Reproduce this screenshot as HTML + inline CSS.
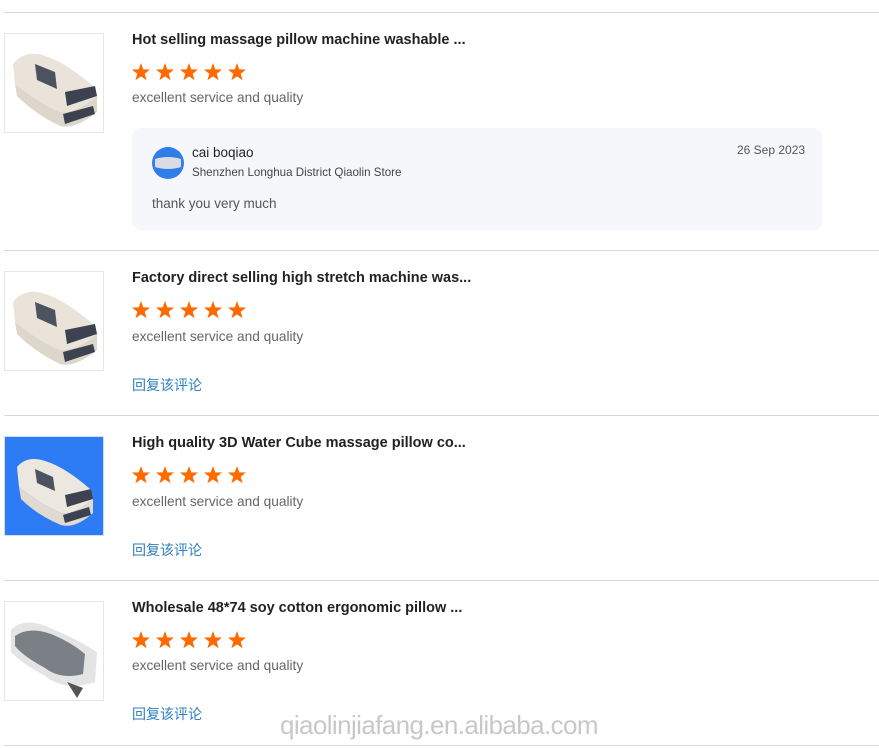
<!DOCTYPE html>
<html><head><meta charset="utf-8"><style>
*{margin:0;padding:0;box-sizing:border-box}
body{width:879px;height:748px;background:#fff;position:relative;overflow:hidden;font-family:"Liberation Sans","Noto Sans CJK SC",sans-serif}
.a{position:absolute;white-space:nowrap}
.line{position:absolute;left:4px;right:0;height:1px;background:#d8d8d8}
.img{position:absolute;left:4px;width:100px;height:100px;border:1px solid #e6e6e6;background:#fff;overflow:hidden}
.t{font-size:14.5px;font-weight:bold;color:#222;left:132px}
.d{font-size:13.7px;color:#666;left:132px}
.l{font-size:14px;color:#2f7fc0;left:132px}
.stars{position:absolute;left:132px}
</style></head><body>
<svg width="0" height="0" style="position:absolute"><defs><polygon id="s" points="9,0 11.29,6.34 18.03,6.56 12.71,10.71 14.58,17.19 9,13.4 3.42,17.19 5.29,10.71 -0.03,6.56 6.71,6.34"/></defs></svg>
<div class="line" style="top:12px"></div>
<div class="line" style="top:250px"></div>
<div class="line" style="top:415px"></div>
<div class="line" style="top:580px"></div>
<div class="line" style="top:745px"></div>

<div class="img" style="top:33px">
<svg width="100" height="100" viewBox="0 0 100 100"><path d="M8 30 Q20 15 40 22 Q60 28 88 52 L92 62 Q70 80 55 78 Q35 70 10 50Z" fill="#e9e3da"/><path d="M10 50 Q35 70 55 78 Q70 80 92 62 L92 78 Q70 96 55 92 Q30 80 12 62Z" fill="#ddd6cb"/><path d="M30 30 L50 38 L52 55 L32 46Z" fill="#4d5260"/><path d="M60 58 L90 52 L92 62 L62 72Z" fill="#3d4250"/><path d="M58 80 L88 72 L90 80 L60 90Z" fill="#3d4250"/></svg>
</div>
<div class="a t" style="top:32px">Hot selling massage pillow machine washable ...</div>
<svg class="stars" style="top:63px" width="120" height="18"><g fill="#ff6a00"><use href="#s"/><use href="#s" x="24"/><use href="#s" x="48"/><use href="#s" x="72"/><use href="#s" x="96"/></g></svg>
<div class="a d" style="top:90px">excellent service and quality</div>
<div style="position:absolute;left:132px;top:128px;width:690px;height:102px;background:#f5f7fa;border-radius:9px"></div>
<svg class="a" style="left:152px;top:147px" width="32" height="32"><circle cx="16" cy="16" r="16" fill="#2f7de8"/><path d="M3 12 Q16 8 29 12 L29 20 Q16 24 3 20Z" fill="#d9dde3"/></svg>
<div class="a" style="left:192px;top:145px;font-size:13.5px;color:#222">cai boqiao</div>
<div class="a" style="left:192px;top:166px;font-size:11.6px;color:#444">Shenzhen Longhua District Qiaolin Store</div>
<div class="a" style="left:737px;top:143px;font-size:12px;color:#555">26 Sep 2023</div>
<div class="a" style="left:152px;top:196px;font-size:13.5px;color:#555">thank you very much</div>

<div class="img" style="top:271px">
<svg width="100" height="100" viewBox="0 0 100 100"><path d="M8 30 Q20 15 40 22 Q60 28 88 52 L92 62 Q70 80 55 78 Q35 70 10 50Z" fill="#e9e3da"/><path d="M10 50 Q35 70 55 78 Q70 80 92 62 L92 78 Q70 96 55 92 Q30 80 12 62Z" fill="#ddd6cb"/><path d="M30 30 L50 38 L52 55 L32 46Z" fill="#4d5260"/><path d="M60 58 L90 52 L92 62 L62 72Z" fill="#3d4250"/><path d="M58 80 L88 72 L90 80 L60 90Z" fill="#3d4250"/></svg>
</div>
<div class="a t" style="top:270px">Factory direct selling high stretch machine was...</div>
<svg class="stars" style="top:301px" width="120" height="18"><g fill="#ff6a00"><use href="#s"/><use href="#s" x="24"/><use href="#s" x="48"/><use href="#s" x="72"/><use href="#s" x="96"/></g></svg>
<div class="a d" style="top:329px">excellent service and quality</div>
<div class="a l" style="top:375px">回复该评论</div>

<div class="img" style="top:436px;background:#2d7cf6;border-color:#cfe0fb">
<svg width="100" height="100" viewBox="0 0 100 100"><path d="M12 30 Q22 18 40 24 Q60 30 85 52 L88 62 Q70 78 56 76 Q36 68 14 50Z" fill="#ece7df"/><path d="M14 50 Q36 68 56 76 Q70 78 88 62 L88 76 Q70 92 56 88 Q32 78 16 62Z" fill="#e0dad0"/><path d="M30 32 L48 40 L50 54 L32 46Z" fill="#4d5260"/><path d="M60 58 L86 52 L88 62 L62 70Z" fill="#3d4250"/><path d="M58 78 L84 70 L86 78 L60 86Z" fill="#3d4250"/></svg>
</div>
<div class="a t" style="top:435px">High quality 3D Water Cube massage pillow co...</div>
<svg class="stars" style="top:466px" width="120" height="18"><g fill="#ff6a00"><use href="#s"/><use href="#s" x="24"/><use href="#s" x="48"/><use href="#s" x="72"/><use href="#s" x="96"/></g></svg>
<div class="a d" style="top:494px">excellent service and quality</div>
<div class="a l" style="top:540px">回复该评论</div>

<div class="img" style="top:601px">
<svg width="100" height="100" viewBox="0 0 100 100"><path d="M6 28 Q20 14 45 26 Q70 36 92 50 L90 80 Q60 90 40 74 Q15 60 6 50Z" fill="#e4e4e4"/><path d="M10 34 Q24 24 46 32 Q66 40 80 52 L78 72 Q56 78 40 66 Q18 54 10 44Z" fill="#7b7f86"/><path d="M62 80 L72 96 L78 86Z" fill="#555"/></svg>
</div>
<div class="a t" style="top:600px">Wholesale 48*74 soy cotton ergonomic pillow ...</div>
<svg class="stars" style="top:631px" width="120" height="18"><g fill="#ff6a00"><use href="#s"/><use href="#s" x="24"/><use href="#s" x="48"/><use href="#s" x="72"/><use href="#s" x="96"/></g></svg>
<div class="a d" style="top:658px">excellent service and quality</div>
<div class="a l" style="top:704px">回复该评论</div>

<div class="a" style="left:280px;top:710px;font-size:26px;color:#c8c8c8;letter-spacing:-0.6px">qiaolinjiafang.en.alibaba.com</div>
</body></html>
